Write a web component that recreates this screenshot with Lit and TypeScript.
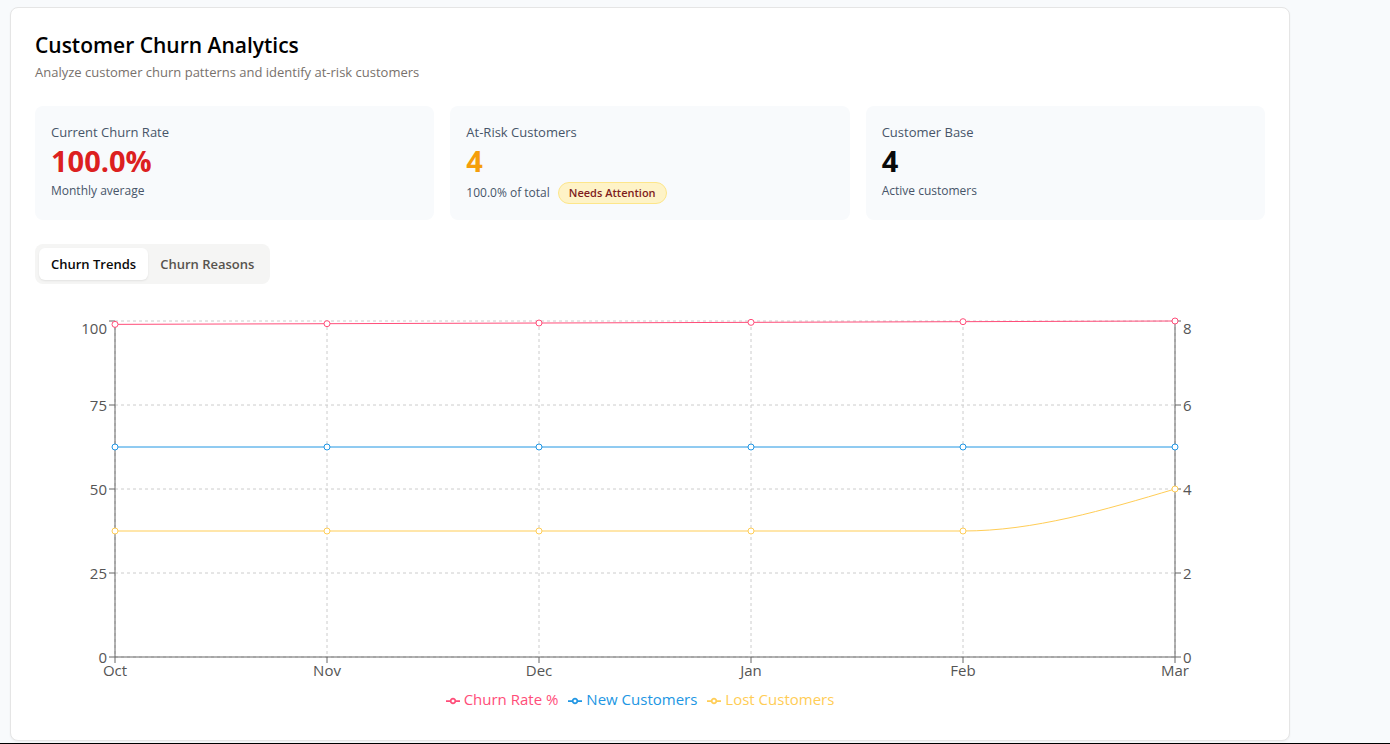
import { LitElement, html, svg, css } from "lit";
import { customElement, property, state } from "lit/decorators.js";

type Series = { name: string; color: string; axis: "left" | "right"; values: number[] };
type Point = { x: number; y: number };

const MONTHS = ["Oct", "Nov", "Dec", "Jan", "Feb", "Mar"];
const SERIES: Series[] = [
  { name: "Churn Rate %", color: "#ff4d79", axis: "left", values: [99, 99.2, 99.4, 99.6, 99.8, 100] },
  { name: "New Customers", color: "#2196e3", axis: "right", values: [5, 5, 5, 5, 5, 5] },
  { name: "Lost Customers", color: "#ffcd56", axis: "right", values: [3, 3, 3, 3, 3, 4] },
];
const AXES = { left: [0, 25, 50, 75, 100], right: [0, 2, 4, 6, 8] };
const MARGIN = { top: 5, right: 90, bottom: 30, left: 80 };
const CHART_HEIGHT = 371;

/** Monotone cubic path through evenly ordered points. */
function monotonePath(p: Point[]): string {
  const n = p.length;
  const slope = (i: number) => (p[i + 1].y - p[i].y) / (p[i + 1].x - p[i].x);
  const tangents = p.map((_, i) => {
    if (i === 0 || i === n - 1) return 0;
    const a = slope(i - 1);
    const b = slope(i);
    return a * b <= 0 ? 0 : (2 * a * b) / (a + b);
  });
  tangents[0] = (3 * slope(0) - tangents[1]) / 2;
  tangents[n - 1] = (3 * slope(n - 2) - tangents[n - 2]) / 2;
  let d = `M${p[0].x},${p[0].y}`;
  for (let i = 0; i < n - 1; i++) {
    const t = (p[i + 1].x - p[i].x) / 3;
    d += `C${p[i].x + t},${p[i].y + t * tangents[i]},${p[i + 1].x - t},${p[i + 1].y - t * tangents[i + 1]},${p[i + 1].x},${p[i + 1].y}`;
  }
  return d;
}

@customElement("churn-chart")
export class ChurnChart extends LitElement {
  @state() private width = 1230;
  private observer = new ResizeObserver(([entry]) => {
    this.width = Math.round(entry.contentRect.width);
  });

  static styles = css`
    :host { display: block; min-width: 0; padding-bottom: 5px; }
    .plot { display: block; width: 100%; overflow: visible; }
    .grid { stroke: #ccc; stroke-dasharray: 3 3; }
    .axis { stroke: #666; }
    .tick { fill: #555; font-size: 15px; }
    .end { text-anchor: end; }
    .middle { text-anchor: middle; }
    .line { fill: none; }
    .dot { fill: #fff; }
    .legend { display: flex; justify-content: center; margin: 0; padding: 0 90px 0 80px; list-style: none; font-size: 15px; line-height: 24px; }
    .item { margin-right: 10px; white-space: nowrap; }
    .mark { width: 14px; height: 14px; margin-right: 4px; vertical-align: middle; fill: none; stroke: currentColor; stroke-width: 4; }
  `;

  connectedCallback() {
    super.connectedCallback();
    this.observer.observe(this);
  }

  disconnectedCallback() {
    this.observer.disconnect();
    super.disconnectedCallback();
  }

  render() {
    const x0 = MARGIN.left;
    const x1 = this.width - MARGIN.right;
    const y0 = MARGIN.top;
    const y1 = CHART_HEIGHT - MARGIN.bottom;
    const xs = MONTHS.map((_, i) => x0 + ((x1 - x0) * i) / (MONTHS.length - 1));
    const yOf = (axis: "left" | "right", v: number) => y1 - ((y1 - y0) * v) / AXES[axis][4];
    const labelY = (y: number) => Math.max(y, y0 + 7) + 6;

    return html`
      <svg class="plot" height=${CHART_HEIGHT} role="img" aria-label="Churn trends by month">
        ${AXES.left.map((v) => svg`<line class="grid" x1=${x0} x2=${x1} y1=${yOf("left", v)} y2=${yOf("left", v)} />`)}
        ${xs.map((x) => svg`<line class="grid" x1=${x} x2=${x} y1=${y0} y2=${y1} />`)}
        <line class="axis" x1=${x0} x2=${x1} y1=${y1} y2=${y1} />
        <line class="axis" x1=${x0} x2=${x0} y1=${y0} y2=${y1} />
        <line class="axis" x1=${x1} x2=${x1} y1=${y0} y2=${y1} />
        ${MONTHS.map((m, i) => svg`
          <line class="axis" x1=${xs[i]} x2=${xs[i]} y1=${y1} y2=${y1 + 6} />
          <text class="tick middle" x=${xs[i]} y=${y1 + 19}>${m}</text>`)}
        ${AXES.left.map((v) => svg`
          <line class="axis" x1=${x0 - 6} x2=${x0} y1=${yOf("left", v)} y2=${yOf("left", v)} />
          <text class="tick end" x=${x0 - 8} y=${labelY(yOf("left", v))}>${v}</text>`)}
        ${AXES.right.map((v) => svg`
          <line class="axis" x1=${x1} x2=${x1 + 6} y1=${yOf("right", v)} y2=${yOf("right", v)} />
          <text class="tick" x=${x1 + 8} y=${labelY(yOf("right", v))}>${v}</text>`)}
        ${SERIES.map((s) => {
          const pts = s.values.map((v, i) => ({ x: xs[i], y: yOf(s.axis, v) }));
          return svg`
            <path class="line" stroke=${s.color} d=${monotonePath(pts)} />
            ${pts.map((p) => svg`<circle class="dot" stroke=${s.color} cx=${p.x} cy=${p.y} r="3" />`)}`;
        })}
      </svg>
      <ul class="legend">
        ${SERIES.map((s) => html`
          <li class="item" style="color:${s.color}"><svg class="mark" viewBox="0 0 32 32" aria-hidden="true">
              <path d="M0,16h10.67A5.33,5.33,0,1,1,21.33,16H32M21.33,16A5.33,5.33,0,1,1,10.67,16" />
            </svg><span>${s.name}</span></li>`)}
      </ul>`;
  }
}

@customElement("stat-card")
export class StatCard extends LitElement {
  @property() label = "";
  @property() value = "";
  @property() note = "";
  @property() badge = "";
  @property() tone = "plain";

  static styles = css`
    :host { display: block; box-sizing: border-box; padding: 16px; border-radius: 8px; background: #f8fafc; color: #475569; }
    .label { font-size: 13px; line-height: 20px; }
    .value { font-size: 29px; line-height: 38px; font-weight: 700; color: #0a0a0a; }
    .danger { color: #dc2020; }
    .warning { color: #f59e0b; }
    .foot { display: flex; align-items: center; gap: 8px; margin-top: 2px; font-size: 12px; line-height: 18px; }
    .badge { padding: 1px 10px; border: 1px solid #fde68a; border-radius: 999px; background: #fef3c7; color: #7f1d1d; font-size: 11px; font-weight: 600; }
  `;

  render() {
    return html`
      <div class="label">${this.label}</div>
      <div class="value ${this.tone}">${this.value}</div>
      <div class="foot"><span>${this.note}</span>${this.badge ? html`<span class="badge">${this.badge}</span>` : ""}</div>`;
  }
}

@customElement("app-root")
export class AppRoot extends LitElement {
  @state() private tab = "Churn Trends";

  static styles = css`
    :host { display: block; box-sizing: border-box; min-height: 100vh; padding: 7px 10px 2px; border-bottom: 1px solid #000; background: #f8fafc; font-family: "Open Sans", "Noto Sans", sans-serif; color: #0a0a0a; }
    .card { box-sizing: border-box; max-width: 1280px; padding: 24px; border: 1px solid #e5e5e5; border-radius: 8px; background: #fff; box-shadow: 0 1px 2px rgb(0 0 0 / 5%); }
    .title { margin: 0; font-size: 21px; line-height: 26px; font-weight: 600; color: #000; }
    .subtitle { margin: 4px 0 24px; font-size: 13px; line-height: 20px; color: #78716c; }
    .stats { display: grid; grid-template-columns: repeat(3, 1fr); gap: 16px; }
    .tabs { display: inline-flex; margin: 24px 0 32px; padding: 4px; border-radius: 8px; background: #f5f5f4; }
    .tab { padding: 6px 12px; border: 0; border-radius: 6px; background: none; font: 600 13px/20px "Open Sans", "Noto Sans", sans-serif; color: #57534e; cursor: pointer; }
    .tab[aria-selected="true"] { background: #fff; color: #0a0a0a; box-shadow: 0 1px 2px rgb(0 0 0 / 8%); }
  `;

  render() {
    return html`
      <main class="card">
        <h1 class="title">Customer Churn Analytics</h1>
        <p class="subtitle">Analyze customer churn patterns and identify at-risk customers</p>
        <section class="stats">
          <stat-card label="Current Churn Rate" value="100.0%" note="Monthly average" tone="danger"></stat-card>
          <stat-card label="At-Risk Customers" value="4" note="100.0% of total" badge="Needs Attention" tone="warning"></stat-card>
          <stat-card label="Customer Base" value="4" note="Active customers"></stat-card>
        </section>
        <div class="tabs" role="tablist">
          ${["Churn Trends", "Churn Reasons"].map((t) => html`
            <button class="tab" role="tab" aria-selected=${this.tab === t ? "true" : "false"} @click=${() => (this.tab = t)}>${t}</button>`)}
        </div>
        <churn-chart></churn-chart>
      </main>`;
  }
}
